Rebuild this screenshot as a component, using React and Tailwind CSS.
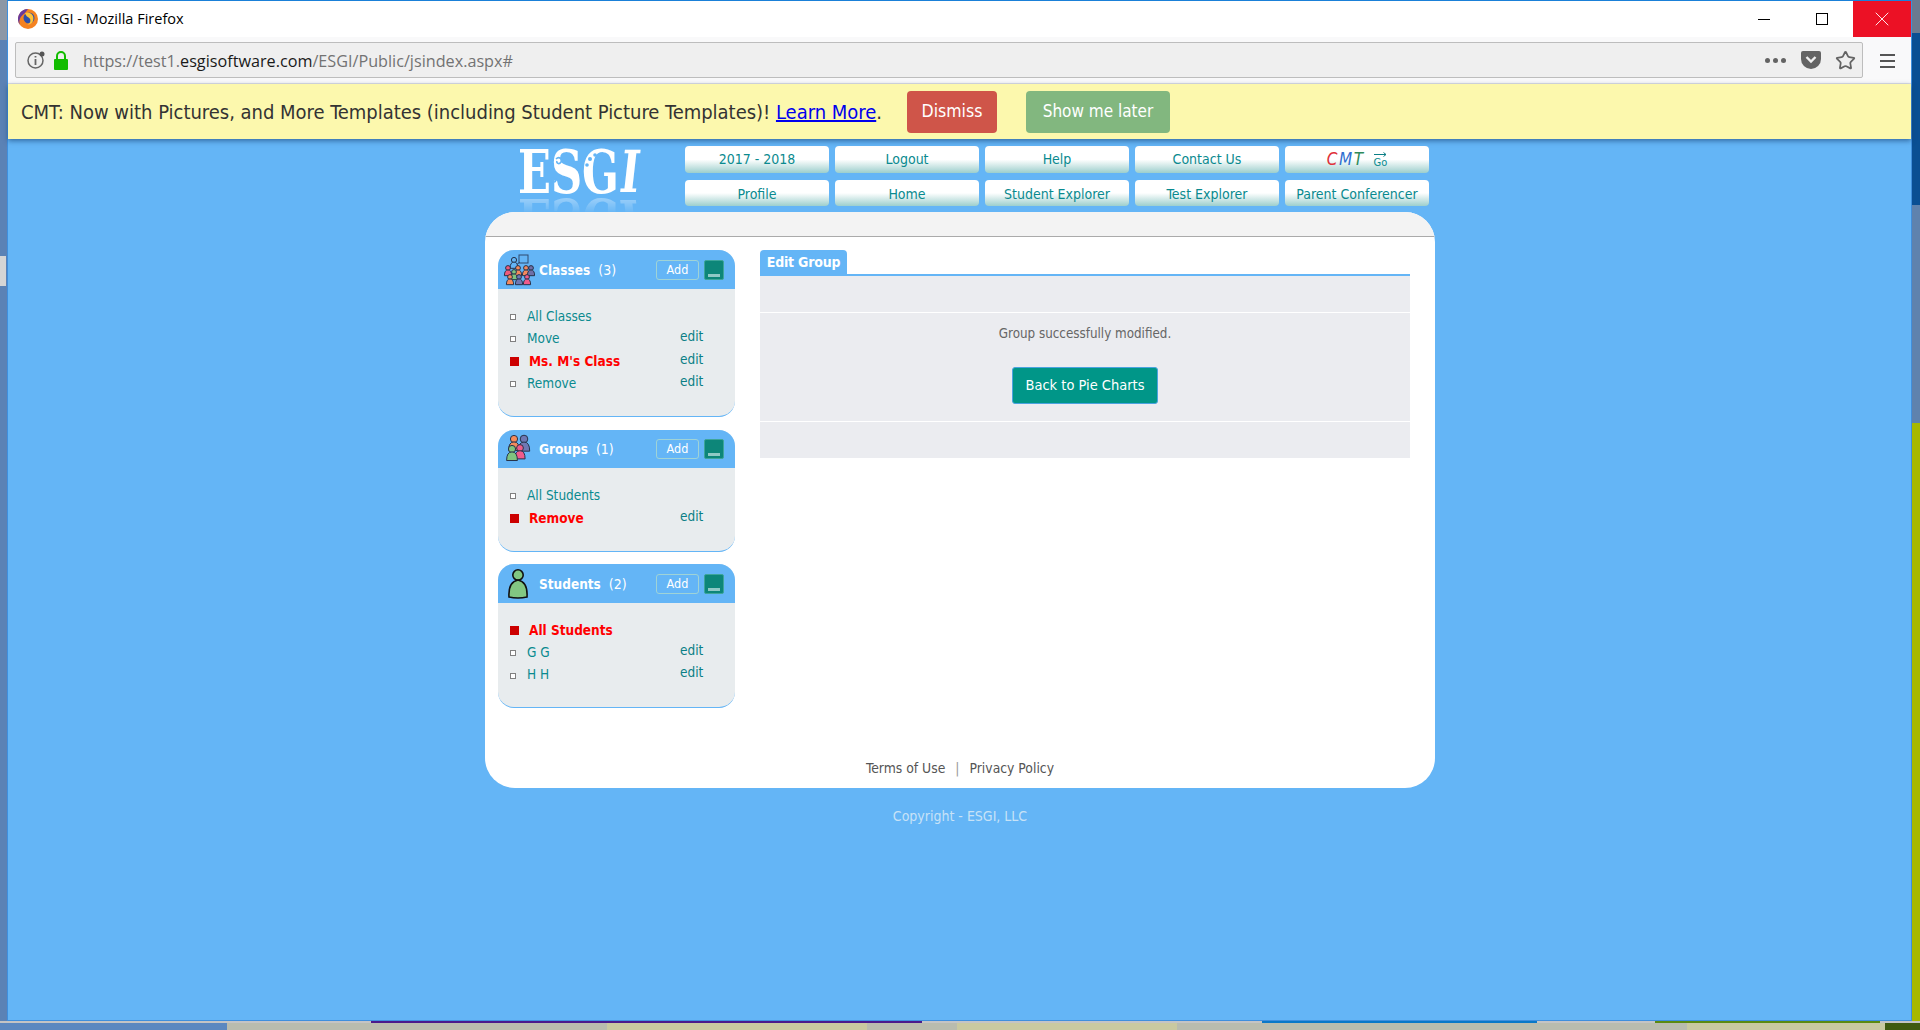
import { Star, X } from "lucide-react";

const navRows = [
  ["2017 - 2018", "Logout", "Help", "Contact Us", "CMT"],
  ["Profile", "Home", "Student Explorer", "Test Explorer", "Parent Conferencer"],
];

function Person({ x, y, r = 3, color }) {
  return (
    <g stroke="#26324a" strokeWidth="1">
      <circle cx={x} cy={y} r={r} fill={color} />
      <path
        d={`M${x - r * 1.5} ${y + r * 3.2} q0 -${r * 2.4} ${r * 1.5} -${r * 2.4} q${r * 1.5} 0 ${r * 1.5} ${r * 2.4} z`}
        fill={color}
      />
    </g>
  );
}

function ClassesIcon() {
  return (
    <svg width="32" height="32" viewBox="0 0 32 32" className="mr-[2px] shrink-0">
      <rect x="16" y="1" width="9" height="8" fill="none" stroke="#2e4a6e" strokeWidth="1" />
      <path d="M13 11l4 -3" stroke="#2e4a6e" fill="none" />
      <Person x={11} y={6} r={2.6} color="#64b5f6" />
      <Person x={5} y={14} r={2.4} color="#ef5b7b" />
      <Person x={15} y={14} r={2.4} color="#f58a5c" />
      <Person x={23} y={14} r={2.4} color="#f58a5c" />
      <Person x={28} y={14} r={2.4} color="#6f6fa8" />
      <Person x={11} y={18} r={2.4} color="#7fc47f" />
      <Person x={7} y={23} r={2.4} color="#f58a5c" />
      <Person x={16} y={23} r={2.4} color="#6f78b4" />
      <Person x={24} y={23} r={2.4} color="#ef5b8b" />
    </svg>
  );
}

function GroupsIcon() {
  return (
    <svg width="32" height="32" viewBox="0 0 32 32" className="mr-[2px] shrink-0">
      <Person x={11} y={6} r={3.6} color="#f58a5c" />
      <Person x={21} y={6} r={3.8} color="#6f78b4" />
      <Person x={17} y={15} r={3.4} color="#ef5b8b" />
      <Person x={9} y={16} r={3.6} color="#7fc47f" />
    </svg>
  );
}

function StudentIcon() {
  return (
    <svg width="32" height="32" viewBox="0 0 32 32" className="mr-[2px] shrink-0">
      <g stroke="#111" strokeWidth="1.6" fill="#82c782">
        <circle cx="15" cy="7" r="5.2" />
        <path d="M6 29 q-1 -15 9 -17 q10 2 9 17 q-9 2 -18 0z" />
      </g>
    </svg>
  );
}

function Panel({ icon, title, count, rows, headerHeight, bodyPadding }) {
  return (
    <div className="overflow-hidden rounded-[16px] border-b border-[#64b5f6] bg-[#e8ecee]">
      <div className={`flex items-center bg-[#64b5f6] pl-[5px] pr-[11px] text-white ${headerHeight}`}>
        {icon}
        <span className="ml-[2px] text-[13.5px] font-bold">{title}</span>
        <span className="ml-[8px] text-[14px]">({count})</span>
        <span className="ml-auto flex h-[20px] w-[43px] items-center justify-center rounded-[3px] border border-[#9fd3d6] text-[12.5px]">
          Add
        </span>
        <span className="ml-[5px] flex h-[20px] w-[20px] items-end justify-center rounded-[2px] border border-[#3da59a] bg-[#0d8679] pb-[2px]">
          <span className="h-[3px] w-[12px] bg-[#8fc9c5]" />
        </span>
      </div>
      <div className={`pt-[16px] ${bodyPadding}`}>
        {rows.map((row) => (
          <div key={row.label} className="flex h-[22.3px] items-center pl-[12px] text-[13.5px]">
            <span className="flex w-[17px] shrink-0 items-center">
              {row.active ? (
                <span className="mt-[2px] h-[9px] w-[9px] bg-[#cc0000]" />
              ) : (
                <span className="mt-[2px] h-[6px] w-[6px] border border-[#808080] bg-white" />
              )}
            </span>
            <span
              className={
                row.active
                  ? "ml-[2px] w-[151px] font-bold text-[#ff0000]"
                  : "w-[153px] text-[#0a8a8f]"
              }
            >
              {row.label}
            </span>
            {row.edit && <span className="mb-[4px] text-[#0a7f86]">edit</span>}
          </div>
        ))}
      </div>
    </div>
  );
}

function NavButton({ label, lower }) {
  return (
    <div
      className={`flex items-center justify-center rounded-[4px] bg-gradient-to-b from-white from-50% to-[#9ccfcd] text-[14px] text-[#0a8a8f] ${
        lower ? "pt-[2px]" : ""
      }`}
    >
      {label === "CMT" ? (
        <span className="flex items-center">
          <span className="mr-[9px] text-[17px] italic tracking-[1.5px]">
            <span className="text-[#e0313a]">C</span>
            <span className="text-[#2f6fd0]">M</span>
            <span className="text-[#2f8a5a]">T</span>
          </span>
          <span className="flex flex-col items-center text-[11px] leading-[11px]">
            <svg width="13" height="5" viewBox="0 0 13 5">
              <path d="M0 2.5h12M9.5 0.5l2.5 2l-2.5 2" stroke="#0a7f86" fill="none" />
            </svg>
            Go
          </span>
        </span>
      ) : (
        label
      )}
    </div>
  );
}

function Logo() {
  return (
    <div className="relative ml-[33px] h-[50px] w-[167px]">
      <div className="flex w-[150px] origin-left scale-x-[0.8] items-start font-['DejaVu_Serif'] text-[60px] font-bold leading-[52px] text-white [-webkit-box-reflect:below_-4px_linear-gradient(transparent_62%,rgba(255,255,255,0.45))] [font-stretch:condensed]">
        <span>ESG</span>
        <span className="ml-[2px] skew-x-[-8deg] text-[58px]">I</span>
      </div>
      <svg width="120" height="50" viewBox="0 0 120 50" className="absolute left-0 top-0">
        <path d="M38 13c3 -3 7 0 5 3s-5 1 -4 -1" stroke="#64b5f6" strokeWidth="1.6" fill="none" />
        <path d="M34 37c-3 -2 -1 -6 2 -5s2 4 0 4" stroke="#64b5f6" strokeWidth="1.6" fill="none" />
        <circle cx="72" cy="13" r="2" fill="#64b5f6" />
        <circle cx="77" cy="9" r="1.8" fill="#64b5f6" />
        <circle cx="69" cy="19" r="1.8" fill="#64b5f6" />
      </svg>
    </div>
  );
}

export default function App() {
  return (
    <div className="flex h-[1030px] w-[1920px] flex-col overflow-hidden bg-[#8a97a8] [font-family:'DejaVu_Sans',sans-serif] [font-stretch:condensed]">
      <div className="flex h-[1021px]">
        <div className="flex w-[7px] shrink-0 flex-col bg-[#5b82b5]">
          <div className="h-[40px] bg-[#8c97a6]" />
          <div className="h-[216px]" />
          <div className="h-[30px] w-[6px] bg-[#d5d5d5]" />
        </div>

        <div className="flex w-[1905px] shrink-0 flex-col border-x border-y border-x-[#3f8fdd] border-b-[#3f8fdd] border-t-[#1a80d8]">
          {/* firefox chrome */}
          <div className="flex h-[36px] items-center bg-white pl-[10px] [font-family:'Open_Sans',sans-serif] [font-stretch:normal]">
            <svg width="20" height="20" viewBox="0 0 20 20">
              <circle cx="10" cy="10" r="10" fill="#f58220" />
              <path d="M10 0a10 10 0 0 0 -8 16c-2 -6 2 -10 5 -12z" fill="#6a3a9c" />
              <circle cx="11" cy="9" r="5.5" fill="#2f4fa8" />
              <path d="M7 4c5 -2 10 2 8 8c-1 3 -4 4 -6 3c3 0 4 -3 3 -5c-1 -2 -4 -2 -5 -6z" fill="#fdc33a" />
            </svg>
            <span className="ml-[5px] text-[14.5px] text-black">ESGI - Mozilla Firefox</span>
            <div className="ml-auto flex h-full items-center">
              <span className="h-px w-[12px] bg-black" />
              <span className="ml-[46px] h-[12px] w-[12px] border border-black" />
              <span className="ml-[25px] flex h-full w-[58px] items-center justify-center bg-[#ec1125]">
                <X size={24} strokeWidth={0.9} className="text-white" />
              </span>
            </div>
          </div>
          <div className="flex h-[47px] items-start border-b border-[#e0e0e6] bg-[#f9f9fa] pl-[7px] pt-[5px] [font-family:'Open_Sans',sans-serif] [font-stretch:normal]">
            <div className="flex h-[36px] w-[1848px] items-center rounded-[2px] border border-[#bdbdbd] bg-[#efefef] pl-[11px]">
              <svg width="18" height="18" viewBox="0 0 18 18">
                <circle cx="8.5" cy="9.5" r="7.5" fill="none" stroke="#666" strokeWidth="1.5" />
                <path d="M8.5 8v6M8.5 5v1.6" stroke="#666" strokeWidth="1.8" />
                <circle cx="15" cy="3" r="2.5" fill="#555" />
              </svg>
              <svg width="16" height="19" viewBox="0 0 16 19" className="ml-[8px]">
                <path d="M4 8V5a4 4 0 0 1 8 0v3" stroke="#12bc00" strokeWidth="2" fill="none" />
                <rect x="1" y="8" width="14" height="11" rx="1" fill="#12bc00" />
              </svg>
              <span className="ml-[14px] mt-[3px] text-[16.2px] text-[#737373]">
                https://test1.<span className="text-[#1a1a1a]">esgisoftware.com</span>/ESGI/Public/jsindex.aspx#
              </span>
              <div className="ml-auto flex items-center pr-[6px] text-[#636363]">
                <span className="flex gap-[3px]">
                  <span className="h-[5px] w-[5px] rounded-full bg-[#636363]" />
                  <span className="h-[5px] w-[5px] rounded-full bg-[#636363]" />
                  <span className="h-[5px] w-[5px] rounded-full bg-[#636363]" />
                </span>
                <svg width="20" height="18" viewBox="0 0 20 18" className="ml-[15px]">
                  <path d="M0 2a2 2 0 0 1 2 -2h16a2 2 0 0 1 2 2v6a10 10 0 0 1 -20 0z" fill="#636363" />
                  <path d="M5.5 6l4.5 4.5l4.5 -4.5" stroke="#efefef" strokeWidth="2.4" fill="none" />
                </svg>
                <Star size={21} strokeWidth={2} className="ml-[14px]" />
              </div>
            </div>
            <div className="ml-[17px] mt-[12px] flex w-[15px] flex-col gap-[4px]">
              <span className="h-[2px] bg-[#555]" />
              <span className="h-[2px] bg-[#555]" />
              <span className="h-[2px] bg-[#555]" />
            </div>
          </div>

          {/* notice */}
          <div className="relative z-10 flex h-[55px] shrink-0 items-center bg-[#fcf8ad] pl-[13px] text-[#333] shadow-[0_2px_5px_rgba(20,60,110,0.6)]">
            <span className="w-[886px] text-[20px] tracking-[-0.02px]">
              CMT: Now with Pictures, and More Templates (including Student Picture Templates)!{" "}
              <span className="text-[#0000ee] underline">Learn More</span>.
            </span>
            <span className="flex h-[42px] w-[90px] items-center justify-center rounded-[4px] bg-[#cf5549] text-[17.5px] text-white">
              Dismiss
            </span>
            <span className="ml-[29px] flex h-[42px] w-[144px] items-center justify-center rounded-[4px] bg-[#82b77f] text-[17px] text-white">
              Show me later
            </span>
          </div>

          {/* page */}
          <div className="flex flex-1 flex-col items-center bg-[#64b5f6] pl-px">
            <div className="flex h-[73px] w-[950px] shrink-0 pb-[6px] pt-[7px]">
              <Logo />
              <div className="grid grid-cols-[repeat(5,144px)] grid-rows-[27px_26px] gap-x-[6px] gap-y-[7px]">
                {navRows.map((row, i) =>
                  row.map((label) => <NavButton key={label} label={label} lower={i === 1} />)
                )}
              </div>
            </div>

            <div className="relative flex h-[576px] w-[950px] shrink-0 flex-col overflow-hidden rounded-[30px] bg-white">
              <div className="h-[25px] shrink-0 border-b border-[#aaaaaa] bg-[#f3f3f3]" />
              <div className="flex flex-1 gap-[25px] pl-[13px] pt-[13px]">
                <div className="flex w-[237px] flex-col">
                  <Panel
                    icon={<ClassesIcon />}
                    title="Classes"
                    count={3}
                    headerHeight="h-[39px] pt-px"
                    bodyPadding="pb-[22px]"
                    rows={[
                      { label: "All Classes" },
                      { label: "Move", edit: true },
                      { label: "Ms. M's Class", edit: true, active: true },
                      { label: "Remove", edit: true },
                    ]}
                  />
                  <div className="h-[13px]" />
                  <Panel
                    icon={<GroupsIcon />}
                    title="Groups"
                    count={1}
                    headerHeight="h-[38px]"
                    bodyPadding="pb-[22px]"
                    rows={[
                      { label: "All Students" },
                      { label: "Remove", edit: true, active: true },
                    ]}
                  />
                  <div className="h-[12px]" />
                  <Panel
                    icon={<StudentIcon />}
                    title="Students"
                    count={2}
                    headerHeight="h-[39px] pt-[2px]"
                    bodyPadding="pb-[21px]"
                    rows={[
                      { label: "All Students", active: true },
                      { label: "G G", edit: true },
                      { label: "H H", edit: true },
                    ]}
                  />
                </div>

                <div className="w-[650px]">
                  <div className="flex h-[26px] border-b-2 border-[#64b5f6]">
                    <span className="flex w-[87px] items-center justify-center rounded-t-[4px] bg-[#64b5f6] pt-[1px] text-[14px] font-bold tracking-[-0.2px] text-white">
                      Edit Group
                    </span>
                  </div>
                  <div className="h-[37px] border-b border-white bg-[#ebecf0]" />
                  <div className="flex h-[109px] flex-col items-center border-b border-white bg-[#ebecf0] pt-[11px]">
                    <span className="text-[13.3px] leading-[20px] text-[#666]">Group successfully modified.</span>
                    <span className="mt-[23px] flex h-[37px] w-[146px] items-center justify-center rounded-[3px] border border-[#4aa3e0] bg-[#009688] text-[14.5px] text-white">
                      Back to Pie Charts
                    </span>
                  </div>
                  <div className="h-[36px] bg-[#ebecf0]" />
                </div>
              </div>
              <div className="flex justify-center pb-[11px] text-[13.8px] leading-[18px] text-[#555]">
                <span>Terms of Use</span>
                <span className="mx-[10px] text-[#999]">|</span>
                <span>Privacy Policy</span>
              </div>
            </div>

            <div className="mt-[19px] text-[14px] leading-[18px] text-[#c7e2f7]">Copyright - ESGI, LLC</div>
          </div>
        </div>

        <div className="flex flex-1 flex-col">
          <div className="h-[33px] bg-[#6a7a90]" />
          <div className="h-[172px] bg-[#0a4f93]" />
          <div className="h-[218px] bg-[#5f82ad]" />
          <div className="flex-1 bg-[#a8b800]" />
        </div>
      </div>

      {/* edges of the windows behind */}
      <div className="flex h-[2px] shrink-0 bg-[#c4c4c4]">
        <div className="ml-[371px] w-[551px] bg-[#4a1a8c]" />
        <div className="ml-[340px] w-[275px] bg-[#0a78c8]" />
        <div className="ml-[118px] w-[225px] bg-[#5a8a10]" />
      </div>
      <div className="flex flex-1">
        <div className="w-[227px] bg-[#5b88c0]" />
        <div className="w-[380px] bg-[#b9bcae]" />
        <div className="w-[260px] bg-[#c9c9a0]" />
        <div className="w-[90px] bg-[#b9bcae]" />
        <div className="w-[220px] bg-[#c9c9a0]" />
        <div className="w-[510px] bg-[#b9bcae]" />
        <div className="w-[198px] bg-[#c9c9a0]" />
        <div className="flex-1 bg-[#3f5a10]" />
      </div>
    </div>
  );
}
